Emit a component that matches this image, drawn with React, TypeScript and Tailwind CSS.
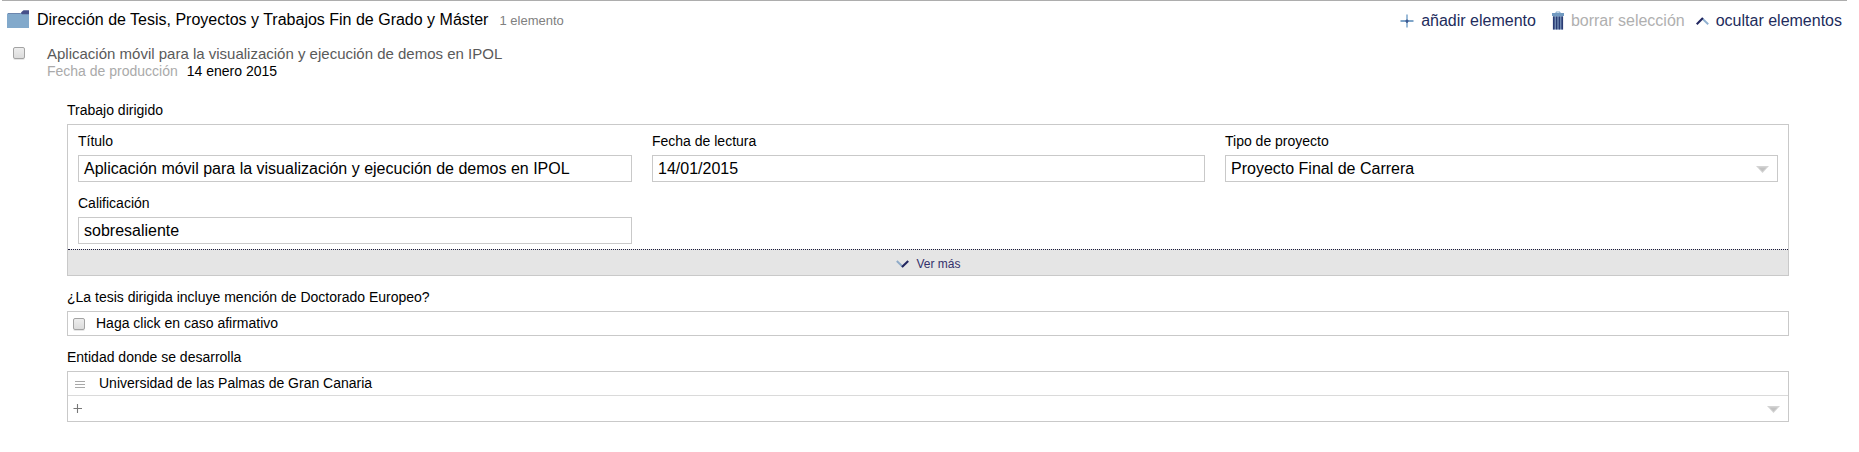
import type { ReactNode } from 'react'

function FolderIcon() {
  return (
    <svg width="22" height="18" viewBox="0 0 22 18" className="shrink-0">
      <path d="M13 4.5L14.5 2L16.5 0.3H22V5H13Z" fill="#46508a" />
      <path d="M0 18V4L1 3H13.5L15 4.2H22V18Z" fill="#82a9cb" />
      <path d="M1 3.5H13.5" stroke="#6c86ae" />
    </svg>
  )
}

function PlusIcon() {
  return (
    <svg width="12" height="12" viewBox="0 0 12 12" className="shrink-0 overflow-visible">
      <path d="M-0.5 6H12.5" stroke="#7fa5c8" strokeWidth="2" />
      <path d="M6 -0.5V12.5" stroke="#9dbcd8" strokeWidth="2" />
      <path d="M4.5 6H7.5M6 4.5V8" stroke="#35508a" strokeWidth="1.4" />
    </svg>
  )
}

function TrashIcon() {
  return (
    <svg width="12" height="19" viewBox="0 0 12 19" className="shrink-0">
      <path d="M3.5 2.5L4.5 1H7.5L8.5 2.5" fill="none" stroke="#82a9cb" strokeWidth="1.2" />
      <path d="M0 2H12V5H0Z" fill="#7199c0" />
      <path d="M1 5H11V18.5H1Z" fill="#8eabcc" />
      <path d="M1.8 5.5V18.5M4.6 5.5V18.5M7.4 5.5V18.5M10.2 5.5V18.5" stroke="#2a3c74" strokeWidth="1.8" />
    </svg>
  )
}

function ChevronUp() {
  return (
    <svg width="13" height="8" viewBox="0 0 13 8" className="shrink-0">
      <path d="M6 1.2L12.2 7.2" stroke="#8fb0d0" strokeWidth="1.9" />
      <path d="M0.7 7.2L6.9 1" stroke="#22265f" strokeWidth="2.1" />
    </svg>
  )
}

function ChevronDown() {
  return (
    <svg width="13" height="8" viewBox="0 0 13 8" className="shrink-0">
      <path d="M0.8 1L7 7" stroke="#8fabc8" strokeWidth="1.9" />
      <path d="M6 7L12.2 1" stroke="#22265f" strokeWidth="2.1" />
    </svg>
  )
}

function SelectArrow() {
  return (
    <svg width="13" height="7" viewBox="0 0 13 7" className="shrink-0">
      <path d="M0 0H13L6.5 7Z" fill="#d4d4d4" />
      <path d="M2.5 1.5H10.5L6.5 5.5Z" fill="#c2c2c2" />
    </svg>
  )
}

function Checkbox() {
  return (
    <button
      type="button"
      role="checkbox"
      aria-checked="false"
      className="block size-3 shrink-0 rounded-[2px] border border-[#a3a3a3] bg-linear-to-b from-[#ededed] to-[#dcdcdc] shadow-[0_1px_0_#e6e6e6]"
    />
  )
}

function Field({ label, value, select }: { label: string; value: string; select?: boolean }) {
  return (
    <div>
      <div className="h-5 text-sm">{label}</div>
      <div className="mt-1 flex h-[27px] items-center justify-between border border-[#c9c9c9] pr-2 pl-[5px] text-base">
        <span>{value}</span>
        {select && <span className="pt-px"><SelectArrow /></span>}
      </div>
    </div>
  )
}

function Section({ label, children }: { label: string; children: ReactNode }) {
  return (
    <section>
      <div className="h-5 text-sm">{label}</div>
      <div className="mt-1 border border-[#c9c9c9]">{children}</div>
    </section>
  )
}

export default function App() {
  return (
    <div className="h-[452px] overflow-hidden bg-white pl-0.5 font-['Liberation_Sans',Arial,sans-serif] text-black">
      <header className="flex h-[38px] w-[1845px] justify-between border-t border-[#adadad] pr-[5px] pl-[5px]">
        <div className="flex pt-[9px]">
          <FolderIcon />
          <h1 className="-mt-0.5 ml-2 text-base">Dirección de Tesis, Proyectos y Trabajos Fin de Grado y Máster</h1>
          <span className="mt-px ml-[11px] text-[13px] leading-5 text-[#808080]">1 elemento</span>
        </div>
        <nav className="flex h-[39px] items-center text-base text-[#222c5c]">
          <span className="flex items-center gap-2"><PlusIcon />añadir elemento</span>
          <span className="ml-4 flex items-center gap-[7px] text-[#b0b0b0]"><TrashIcon />borrar selección</span>
          <span className="ml-[11px] flex items-center gap-[7px]"><ChevronUp />ocultar elementos</span>
        </nav>
      </header>
      <div className="flex gap-[22px] pt-2 pl-[11px]">
        <div className="pt-px"><Checkbox /></div>
        <div>
          <div className="-mt-px h-[17px] text-[15px] leading-[17px] text-[#5a5a5a]">Aplicación móvil para la visualización y ejecución de demos en IPOL</div>
          <div className="flex h-[18px] gap-[9px] text-sm leading-[18px]">
            <span className="text-[#aaaaaa]">Fecha de producción</span>
            <span>14 enero 2015</span>
          </div>
        </div>
      </div>
      <main className="mt-5 ml-[65px] flex w-[1722px] flex-col gap-[11px]">
        <Section label="Trabajo dirigido">
          <div className="grid h-[124px] grid-cols-[554px_553px_553px] content-start gap-x-5 gap-y-[11px] px-2.5 pt-1.5">
            <Field label="Título" value="Aplicación móvil para la visualización y ejecución de demos en IPOL" />
            <Field label="Fecha de lectura" value="14/01/2015" />
            <Field label="Tipo de proyecto" value="Proyecto Final de Carrera" select />
            <Field label="Calificación" value="sobresaliente" />
          </div>
          <button type="button" className="flex h-[26px] w-full items-center justify-center gap-[7px] border-t border-dotted border-[#1c1c3c] bg-[#e5e5e5] pt-px pl-px text-xs text-[#33306b]">
            <span className="pt-0.5"><ChevronDown /></span>
            <span className="pt-px">Ver más</span>
          </button>
        </Section>
        <Section label="¿La tesis dirigida incluye mención de Doctorado Europeo?">
          <div className="flex h-[23px] items-center gap-[11px] pl-[5px] text-sm">
            <Checkbox />
            <span className="pb-0.5">Haga click en caso afirmativo</span>
          </div>
        </Section>
        <Section label="Entidad donde se desarrolla">
          <div className="flex h-6 items-center gap-3.5 border-b border-[#dadada] pl-[7px] text-sm">
            <svg width="10" height="7" viewBox="0 0 10 7" className="mt-0.5">
              <path d="M0 .5H10M0 3.5H10M0 6.5H10" stroke="#a8a8a8" />
            </svg>
            <span className="pb-0.5">Universidad de las Palmas de Gran Canaria</span>
          </div>
          <div className="flex h-[25px] items-center justify-between pr-2 pl-[5px]">
            <svg width="9" height="9" viewBox="0 0 9 9">
              <path d="M0.5 4.5H9M4.5 0V9" stroke="#777777" strokeWidth="1.1" />
            </svg>
            <span className="pt-px"><SelectArrow /></span>
          </div>
        </Section>
      </main>
    </div>
  )
}
